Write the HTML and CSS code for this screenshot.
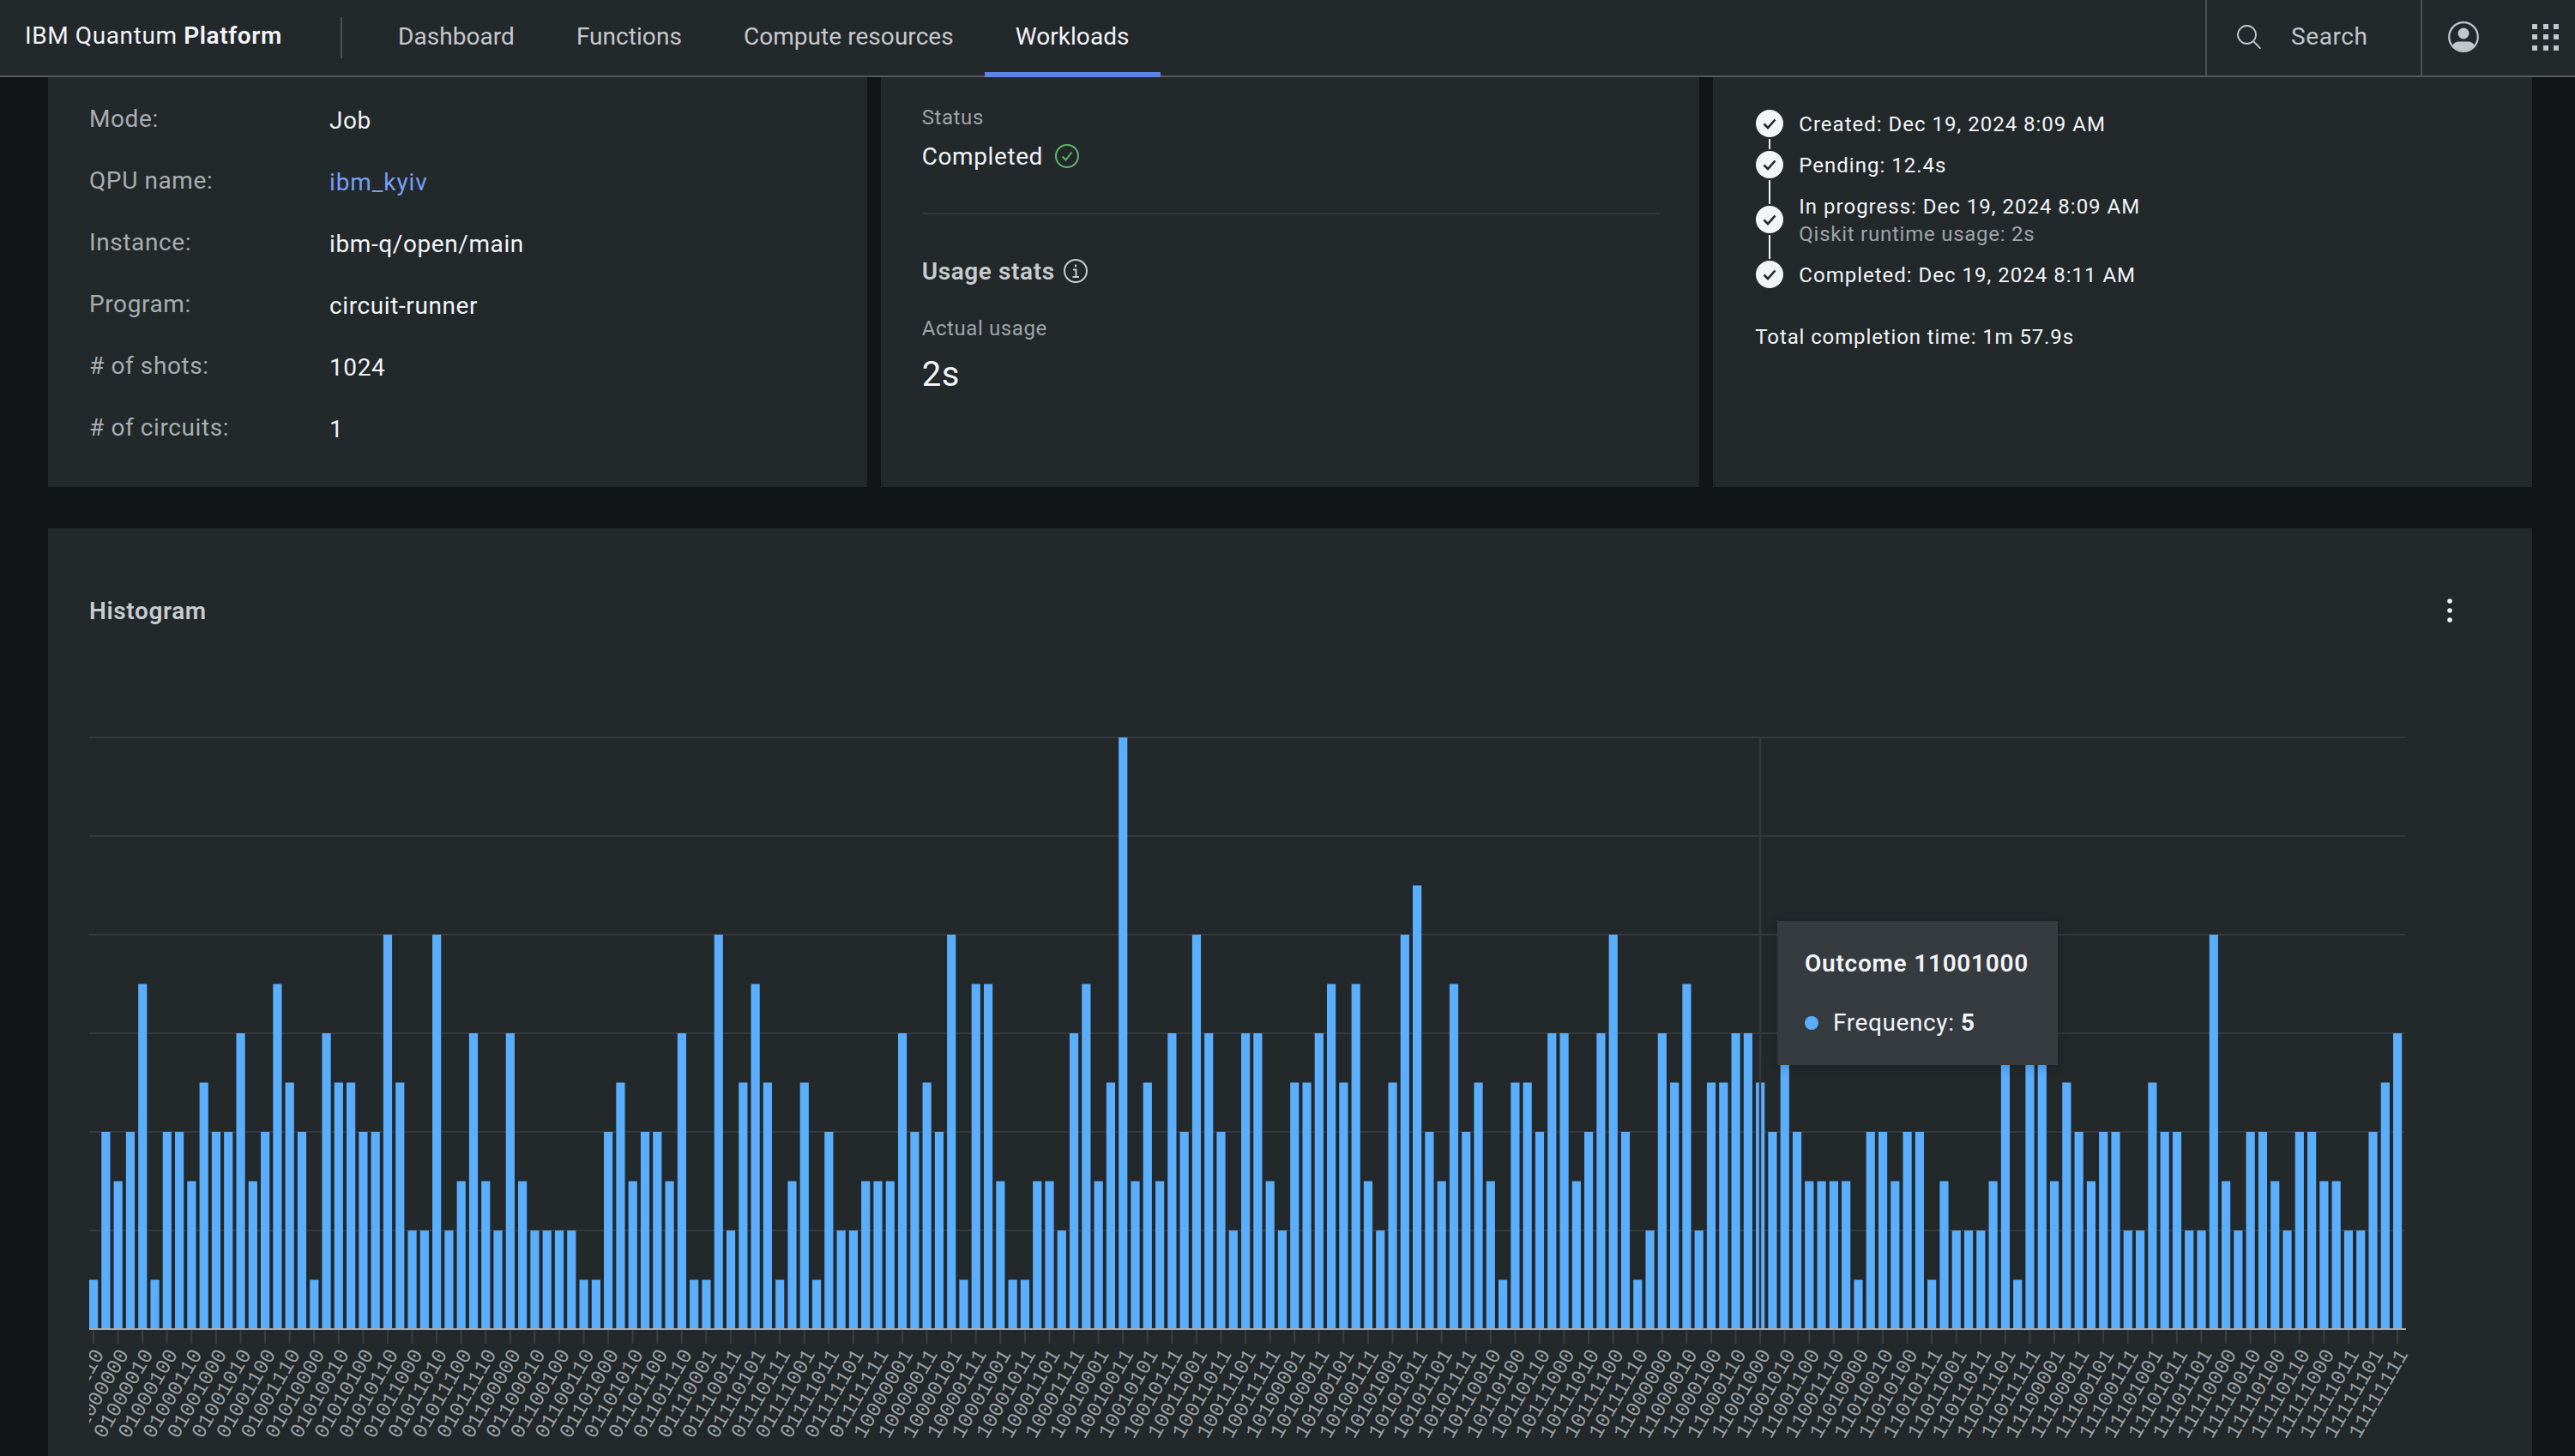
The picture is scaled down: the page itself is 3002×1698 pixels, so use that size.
FILE: index.html

```html
<!DOCTYPE html>
<html lang="en">
<head>
  <meta charset="UTF-8" />
  <title>IBM Quantum Platform</title>
  <link rel="stylesheet" href="styles.css">
</head>
<body>
  <header class="topbar">
    <div class="brand">IBM Quantum <strong>Platform</strong></div>
    <nav class="nav">
      <a class="nav-item nav-dashboard">Dashboard</a>
      <a class="nav-item nav-functions">Functions</a>
      <a class="nav-item nav-compute">Compute resources</a>
      <a class="nav-item nav-active">Workloads</a>
    </nav>
    <div class="search">
      <svg class="search-icon" viewBox="0 0 28 28" width="28" height="28">
        <circle cx="11.5" cy="11.5" r="10.5" fill="none" stroke="#c1c7cd" stroke-width="1.8"/>
        <path d="M19 19 L27.5 27.8" stroke="#c1c7cd" stroke-width="1.8"/>
      </svg>
      <span>Search</span>
    </div>
    <svg class="user-icon" viewBox="0 0 36 36" width="36" height="36">
      <defs><clipPath id="userClip"><circle cx="18" cy="18" r="16"/></clipPath></defs>
      <circle cx="18" cy="18" r="16.8" fill="none" stroke="#c1c7cd" stroke-width="2.2"/>
      <circle cx="18" cy="14" r="6.5" fill="#c1c7cd"/>
      <path d="M5 36 V30 C5 25 10 23.5 13 23.5 H23 C26 23.5 31 25 31 30 V36 Z" fill="#c1c7cd" clip-path="url(#userClip)"/>
    </svg>
    <div class="apps-icon">
      <i></i><i></i><i></i><i></i><i></i><i></i><i></i><i></i><i></i>
    </div>
  </header>

  <main class="content">
    <section class="cards">
      <div class="card">
        <div class="detail-row"><span class="detail-label">Mode:</span><span class="detail-value">Job</span></div>
        <div class="detail-row"><span class="detail-label">QPU name:</span><a class="detail-value detail-link">ibm_kyiv</a></div>
        <div class="detail-row"><span class="detail-label">Instance:</span><span class="detail-value">ibm-q/open/main</span></div>
        <div class="detail-row"><span class="detail-label">Program:</span><span class="detail-value">circuit-runner</span></div>
        <div class="detail-row"><span class="detail-label"># of shots:</span><span class="detail-value">1024</span></div>
        <div class="detail-row"><span class="detail-label"># of circuits:</span><span class="detail-value">1</span></div>
      </div>

      <div class="card card-status">
        <p class="small-label status-label">Status</p>
        <div class="status-row">
          <span>Completed</span>
          <svg viewBox="0 0 28 28" width="28" height="28">
            <circle cx="14" cy="14" r="13" fill="none" stroke="#5cb868" stroke-width="2"/>
            <path d="M8.5 14.5 L12.5 18.5 L19.5 9.5" fill="none" stroke="#5cb868" stroke-width="2"/>
          </svg>
        </div>
        <hr class="rule">
        <div class="usage-title">
          <span>Usage stats</span>
          <svg viewBox="0 0 28 28" width="28" height="28">
            <circle cx="14" cy="14" r="13" fill="none" stroke="#c8cccf" stroke-width="2"/>
            <path d="M14 6.5 V9.5 M11 12.5 H14.5 V20.5 M10.5 21 H18" fill="none" stroke="#c8cccf" stroke-width="2"/>
          </svg>
        </div>
        <p class="small-label usage-label">Actual usage</p>
        <p class="usage-value">2s</p>
      </div>

      <div class="card card-timeline">
        <ul class="timeline">
          <li class="step">
            <svg class="step-icon" viewBox="0 0 32 32" width="32" height="32"><circle cx="16" cy="16" r="16" fill="#f2f4f8"/><path d="M9.5 16.5 L14 21 L22.5 11.5" fill="none" stroke="#23282b" stroke-width="2.6"/></svg>
            <div>Created: Dec 19, 2024 8:09 AM</div>
          </li>
          <li class="step">
            <svg class="step-icon" viewBox="0 0 32 32" width="32" height="32"><circle cx="16" cy="16" r="16" fill="#f2f4f8"/><path d="M9.5 16.5 L14 21 L22.5 11.5" fill="none" stroke="#23282b" stroke-width="2.6"/></svg>
            <div>Pending: 12.4s</div>
          </li>
          <li class="step step-double">
            <svg class="step-icon" viewBox="0 0 32 32" width="32" height="32"><circle cx="16" cy="16" r="16" fill="#f2f4f8"/><path d="M9.5 16.5 L14 21 L22.5 11.5" fill="none" stroke="#23282b" stroke-width="2.6"/></svg>
            <div>In progress: Dec 19, 2024 8:09 AM<br><span class="step-note">Qiskit runtime usage: 2s</span></div>
          </li>
          <li class="step">
            <svg class="step-icon" viewBox="0 0 32 32" width="32" height="32"><circle cx="16" cy="16" r="16" fill="#f2f4f8"/><path d="M9.5 16.5 L14 21 L22.5 11.5" fill="none" stroke="#23282b" stroke-width="2.6"/></svg>
            <div>Completed: Dec 19, 2024 8:11 AM</div>
          </li>
        </ul>
        <p class="total-time">Total completion time: 1m 57.9s</p>
      </div>
    </section>

    <section class="histogram">
      <div class="histogram-head">
        <h2>Histogram</h2>
        <svg class="kebab" viewBox="0 0 32 32" width="32" height="32" fill="#f2f4f8">
          <circle cx="16" cy="5" r="2.8"/><circle cx="16" cy="16" r="2.8"/><circle cx="16" cy="27" r="2.8"/>
        </svg>
      </div>
      <div class="chart">
        <svg id="chart" width="2896" height="966" viewBox="0 0 2896 966"></svg>
        <div class="tooltip">
          <div class="tooltip-title">Outcome 11001000</div>
          <div class="tooltip-row"><i class="tooltip-dot"></i><span>Frequency: <b>5</b></span></div>
        </div>
      </div>
    </section>
  </main>

  <script src="script.js"></script>
</body>
</html>
```

FILE: styles.css

```css
* {
  box-sizing: border-box;
}
html, body {
  height: 100%;
}
body {
  margin: 0;
  overflow: hidden;
  background: #111518;
  color: #f2f4f8;
  font-family: Roboto, "Noto Sans", Arial, sans-serif;
  font-size: 28px;
  letter-spacing: 0.6px;
}
p, ul, h2 {
  margin: 0;
  padding: 0;
}

/* top bar */
.topbar {
  display: flex;
  align-items: center;
  height: 90px;
  background: #23282b;
  border-bottom: 2px solid #54585b;
}
.brand {
  width: 399px;
  height: 48px;
  padding-left: 29px;
  line-height: 44px;
  border-right: 2px solid #4b5054;
  white-space: nowrap;
}
.brand strong {
  font-weight: 600;
}
.nav {
  display: flex;
  align-self: stretch;
  margin-left: 29px;
}
.nav-item {
  display: flex;
  align-items: center;
  padding: 0 36px 5px;
  height: 90px;
  color: #c6c9cb;
  letter-spacing: 0.05px;
  white-space: nowrap;
}
.nav-active {
  color: #f2f4f8;
  border-bottom: 6px solid #5c82e6;
  padding-bottom: 0;
}
.search {
  display: flex;
  align-items: center;
  gap: 35px;
  width: 253px;
  height: 88px;
  margin-left: auto;
  padding: 0 0 3px 35px;
  border-left: 2px solid #4b5054;
  border-right: 2px solid #4b5054;
  color: #c1c7cd;
}
.user-icon {
  margin: 0 0 2px 30px;
}
.apps-icon {
  display: grid;
  grid-template-columns: repeat(3, 6px);
  gap: 6.5px;
  margin: 0 19px 2px 62px;
}
.apps-icon i {
  width: 6px;
  height: 6px;
  background: #c1c7cd;
}

/* cards */
.content {
  padding: 0 50px 0 56px;
}
.cards {
  display: grid;
  grid-template-columns: repeat(3, 1fr);
  gap: 16px;
  height: 478px;
}
.card {
  background: #23282b;
}
.card:first-child {
  padding: 12px 48px;
}
.detail-row {
  display: grid;
  grid-template-columns: 280px 1fr;
  align-items: center;
  height: 72px;
}
.detail-label {
  color: #a8aeb2;
}
.detail-value {
  padding-top: 4px;
  color: #f2f4f8;
}
.detail-link {
  color: #78a0f5;
  letter-spacing: 0.9px;
}

.card-status {
  padding: 31px 46px 0 48px;
}
.small-label {
  font-size: 24px;
  line-height: 32px;
  color: #9ea4a8;
}
.status-row, .usage-title {
  display: flex;
  align-items: center;
  gap: 14px;
  height: 40px;
}
.status-row {
  margin-top: 9px;
}
.rule {
  margin: 46px 0;
  border: 0;
  height: 2px;
  background: #33383c;
}
.usage-title {
  font-weight: 600;
  color: #c8cccf;
  gap: 10px;
}
.usage-label {
  margin-top: 31px;
}
.usage-value {
  margin-top: 14px;
  font-size: 40px;
  line-height: 48px;
}

.card-timeline {
  padding: 30px 49px 0 50px;
  font-size: 24px;
  line-height: 32px;
  letter-spacing: 1px;
}
.timeline {
  list-style: none;
}
.step {
  position: relative;
  display: flex;
  align-items: center;
  gap: 18px;
  min-height: 48px;
}
.step > div {
  padding-top: 1px;
}
.step-double {
  min-height: 80px;
}
.step:not(:last-child)::after {
  content: "";
  position: absolute;
  left: 15px;
  top: calc(50% + 18px);
  width: 2px;
  height: 12px;
  background: #f2f4f8;
}
.step + .step::after {
  height: 28px;
}
.step-note {
  color: #9ea4a8;
  letter-spacing: 0.75px;
}
.total-time {
  margin-top: 33px;
  margin-left: -1px;
  letter-spacing: 0.88px;
}

/* histogram */
.histogram {
  margin-top: 48px;
  height: 1082px;
  background: #23282b;
}
.histogram-head {
  display: flex;
  justify-content: space-between;
  align-items: center;
  height: 116px;
  padding: 76px 80px 0 48px;
}
.histogram-head h2 {
  font-size: 28px;
  font-weight: 600;
  color: #c8cccf;
}
.chart {
  position: relative;
}
#chart {
  display: block;
}
.grid-line {
  stroke: #34393d;
  stroke-width: 2;
}
.axis-line {
  stroke: #a8abad;
  stroke-width: 2;
}
.tick {
  stroke: #393f43;
  stroke-width: 2;
}
.bar {
  fill: #5aaefc;
}
.cursor {
  stroke: #34393d;
  stroke-width: 2.5;
}
.axis-label {
  font-family: "Liberation Mono", monospace;
  font-size: 24px;
  letter-spacing: 0;
  fill: #9aa0a4;
}
.tooltip {
  position: absolute;
  left: 2016px;
  top: 342px;
  width: 327px;
  height: 168px;
  padding: 30px 32px;
  background: #363b3f;
  box-shadow: 0 2px 12px rgba(0, 0, 0, 0.2);
}
.tooltip-title {
  font-weight: 600;
  line-height: 40px;
  letter-spacing: 0.75px;
  white-space: nowrap;
}
.tooltip-row {
  display: flex;
  align-items: center;
  gap: 17px;
  margin-top: 29px;
  line-height: 40px;
  white-space: nowrap;
}
.tooltip-dot {
  width: 16px;
  height: 16px;
  border-radius: 50%;
  background: #5aaefc;
}
```

FILE: script.js

```js
const counts = [
  1, 4, 3, 4, 7, 1, 4, 4, 3, 5, 4, 4, 6, 3, 4, 7, 5, 4, 1, 6,
  5, 5, 4, 4, 8, 5, 2, 2, 8, 2, 3, 6, 3, 2, 6, 3, 2, 2, 2, 2,
  1, 1, 4, 5, 3, 4, 4, 3, 6, 1, 1, 8, 2, 5, 7, 5, 1, 3, 5, 1,
  4, 2, 2, 3, 3, 3, 6, 4, 5, 4, 8, 1, 7, 7, 3, 1, 1, 3, 3, 2,
  6, 7, 3, 5, 12, 3, 5, 3, 6, 4, 8, 6, 4, 2, 6, 6, 3, 2, 5, 5,
  6, 7, 5, 7, 3, 2, 5, 8, 9, 4, 3, 7, 4, 5, 3, 1, 5, 5, 4, 6,
  6, 3, 4, 6, 8, 4, 1, 2, 6, 5, 7, 2, 5, 5, 6, 6, 5, 4, 6, 4,
  3, 3, 3, 3, 1, 4, 4, 3, 4, 4, 1, 3, 2, 2, 2, 3, 6, 1, 6, 6,
  3, 5, 4, 3, 4, 4, 2, 2, 5, 4, 4, 2, 2, 8, 3, 2, 4, 4, 3, 2,
  4, 4, 3, 3, 2, 2, 4, 5, 6
];

// outcomes with no shots are left out of the x axis
const missing = [112, 177, 214, 239, 249];
const outcomes = [];
for (let n = 62; n < 256; n++) {
  if (!missing.includes(n)) outcomes.push(n);
}

const left = 48;        // chart area inside the svg
const right = 2748;
const baseline = 818;
const perCount = 57.5;
const band = 2686 / 188;

let svg = '<defs><clipPath id="plot"><rect x="' + left + '" y="0" width="2800" height="966"/></clipPath></defs>';

for (let i = 1; i <= 6; i++) {
  const y = baseline - i * 2 * perCount;
  svg += `<line class="grid-line" x1="${left}" x2="${right}" y1="${y}" y2="${y}"/>`;
}

counts.forEach((count, i) => {
  const h = count * perCount;
  svg += `<rect class="bar" x="${(left + i * band).toFixed(2)}" y="${baseline - h}" width="10.2" height="${h}"/>`;
});

svg += `<line class="cursor" x1="1996" x2="1996" y1="128" y2="${baseline}"/>`;
svg += `<line class="axis-line" x1="${left}" x2="${right + 1}" y1="${baseline}" y2="${baseline}"/>`;

svg += '<g clip-path="url(#plot)">';
counts.forEach((count, i) => {
  if (i % 2) return;
  const x = left + i * band + 5;
  const lx = x + 13;
  const ly = baseline + 29;
  const label = outcomes[i].toString(2).padStart(8, '0');
  svg += `<line class="tick" x1="${x}" x2="${x}" y1="${baseline + 1}" y2="${baseline + 17}"/>`;
  svg += `<text class="axis-label" x="${lx}" y="${ly}" text-anchor="end" transform="rotate(-60 ${lx} ${ly})">${label}</text>`;
});
svg += '</g>';

document.getElementById('chart').innerHTML = svg;
```
